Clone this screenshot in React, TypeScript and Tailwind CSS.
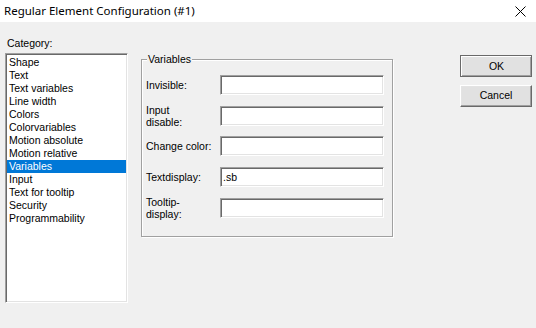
import React from "react";

const items = [
  "Shape",
  "Text",
  "Text variables",
  "Line width",
  "Colors",
  "Colorvariables",
  "Motion absolute",
  "Motion relative",
  "Variables",
  "Input",
  "Text for tooltip",
  "Security",
  "Programmability",
];

function TextBox({ value }: { value?: string }) {
  return (
    <div className="w-[164px] h-[20px] bg-white border border-t-[#a0a0a0] border-l-[#a0a0a0] border-b-white border-r-white shadow-[inset_1px_1px_0_#696969,inset_-1px_-1px_0_#e3e3e3] flex items-center pl-[2px] pt-[1px] text-black">
      {value}
    </div>
  );
}

function Row({ label, value, mt }: { label: React.ReactNode; value?: string; mt: string }) {
  return (
    <div className={`flex items-center h-[20px] ${mt}`}>
      <div className="w-[74px] leading-[12.5px]">{label}</div>
      <TextBox value={value} />
    </div>
  );
}

export default function App() {
  return (
    <div
      className="w-[536px] h-[328px] flex flex-col overflow-hidden text-black"
      style={{ fontFamily: '"Liberation Sans", Arial, sans-serif' }}
    >
      <div className="h-[22px] bg-white flex items-center pl-[4px] pr-[10px] shrink-0">
        <span
          className="text-[11.5px]"
          style={{ fontFamily: '"Noto Sans", "Open Sans", sans-serif' }}
        >
          Regular Element Configuration (#1)
        </span>
        <svg className="ml-auto" width="11" height="11" viewBox="0 0 11 11">
          <path d="M0.5 0.5 L10.5 10.5 M10.5 0.5 L0.5 10.5" stroke="#000" strokeWidth="1" />
        </svg>
      </div>
      <div className="flex-1 bg-[#f0f0f0] flex items-start pl-[5px] text-[10.5px]">
        <div className="mt-[15px] w-[123px] flex flex-col">
          <div className="h-[13px] leading-[13px] pl-[2px]">Category:</div>
          <div className="mt-[3px] h-[250px] bg-white border border-t-[#a0a0a0] border-l-[#a0a0a0] border-b-white border-r-white shadow-[inset_1px_1px_0_#696969,inset_-1px_-1px_0_#e3e3e3] pt-[2px] px-[1px]">
            {items.map((it) => (
              <div
                key={it}
                className={`h-[13px] leading-[13px] pl-[2px] ${
                  it === "Variables" ? "bg-[#0078d7] text-white" : ""
                }`}
              >
                {it}
              </div>
            ))}
          </div>
        </div>
        <div className="ml-[13px] mt-[37px] w-[252px] h-[178px] relative border border-[#a0a0a0] shadow-[inset_1px_1px_0_#fff,1px_1px_0_#fff] pl-[4px]">
          <span className="absolute -top-[7px] left-[5px] px-[1px] bg-[#f0f0f0] leading-[13px]">
            Variables
          </span>
          <Row label="Invisible:" mt="mt-[15px]" />
          <Row
            label={
              <>
                Input
                <br />
                disable:
              </>
            }
            mt="mt-[11px]"
          />
          <Row label="Change color:" mt="mt-[10px]" />
          <Row label="Textdisplay:" value=".sb" mt="mt-[11px]" />
          <Row
            label={
              <>
                Tooltip-
                <br />
                display:
              </>
            }
            mt="mt-[11px]"
          />
        </div>
        <div className="ml-auto mr-[4px] mt-[33px] w-[72px] flex flex-col gap-[8px]">
          <div className="h-[22px] border border-[#696969] bg-[#696969]">
            <div className="h-full bg-[#e1e1e1] flex items-center justify-center border-t border-l border-t-white border-l-white shadow-[inset_-1px_-1px_0_#a0a0a0]">
              OK
            </div>
          </div>
          <div className="h-[22px] bg-[#e1e1e1] flex items-center justify-center border border-t-white border-l-white border-b-[#696969] border-r-[#696969] shadow-[inset_-1px_-1px_0_#a0a0a0,inset_1px_1px_0_#e3e3e3]">
            Cancel
          </div>
        </div>
      </div>
    </div>
  );
}
